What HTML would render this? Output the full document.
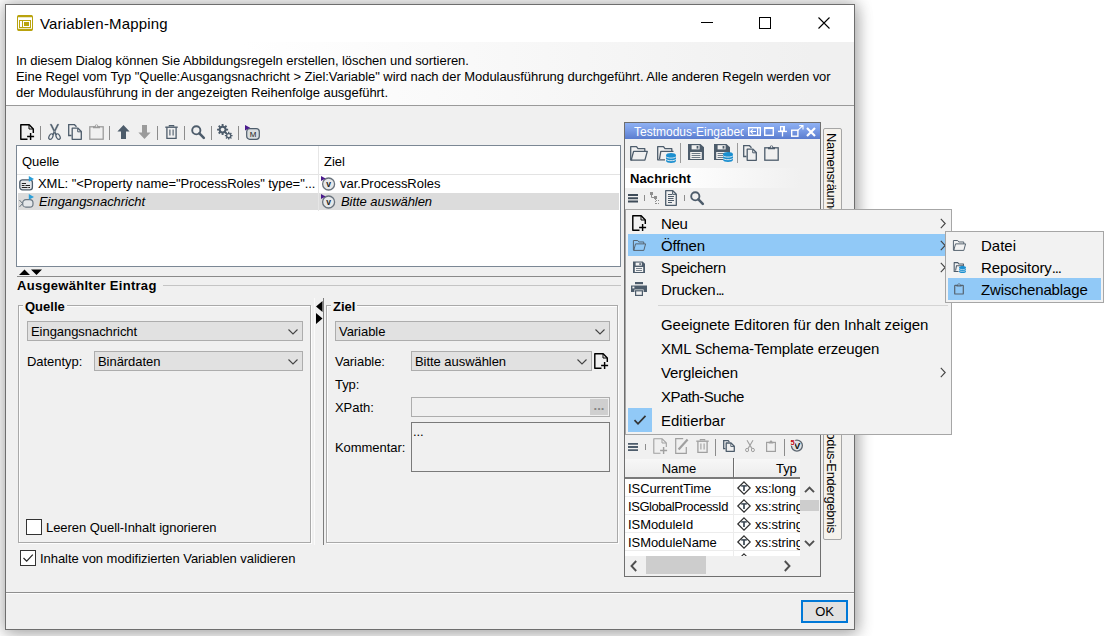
<!DOCTYPE html>
<html lang="de">
<head>
<meta charset="utf-8">
<title>Variablen-Mapping</title>
<style>
html,body{margin:0;padding:0;}
body{width:1112px;height:636px;overflow:hidden;background:#fff;position:relative;
 font-family:"Liberation Sans","DejaVu Sans",sans-serif;font-size:13px;color:#000;}
.abs{position:absolute;}
svg{display:block;overflow:visible;}
.t{position:absolute;white-space:nowrap;line-height:16px;height:16px;letter-spacing:-0.05px;}
.b{font-weight:bold;letter-spacing:0;}
.i{font-style:italic;}
#win{position:absolute;left:5px;top:4px;width:848px;height:624px;border:1px solid #6e6e6e;background:#f0f0f0;
 box-shadow:0 0 14px 2px rgba(0,0,0,.26), 3px 5px 16px rgba(0,0,0,.16);}
#titlebar{position:absolute;left:0;top:0;width:848px;height:37px;background:#fff;}
#title{position:absolute;left:34px;top:9px;font-size:15px;letter-spacing:0.18px;line-height:20px;color:#000;white-space:nowrap;}
#desc{position:absolute;left:6px;top:42px;width:848px;height:63px;background:linear-gradient(to right,#fff 0%,#fff 28%,#f0f0f0 95%);}
.hl{position:absolute;height:1px;background:#a0a0a0;}
.vl{position:absolute;width:1px;background:#a0a0a0;}
.combo{position:absolute;height:18px;border:1px solid #adadad;background:#e1e1e1;}
.combo .t{left:3px;top:2px;}
.combo svg{position:absolute;right:4px;top:7px;}
.grp{position:absolute;border:1px solid #a9a9a9;box-shadow:1px 1px 0 #fdfdfd, inset 1px 1px 0 #fdfdfd;}
.grp .t{background:#f0f0f0;}
.cb{position:absolute;width:14px;height:14px;border:1px solid #333;background:#fff;}
.menu{position:absolute;background:#f2f2f2;border:1px solid #a6a6a6;}
.vt{font-size:13px;line-height:16px;height:16px;letter-spacing:-0.3px;white-space:nowrap;transform-origin:0 0;transform:rotate(90deg);}
.mi{position:absolute;white-space:nowrap;line-height:22px;height:22px;font-size:15px;letter-spacing:-0.12px;}
.dots{letter-spacing:-1.2px;}
</style>
</head>
<body>
<div id="win">
 <div id="titlebar">
  <div id="title">Variablen-Mapping</div>
 </div>
</div>
<div id="desc"></div>

<svg class="abs" style="left:17px;top:15px" width="16" height="16" viewBox="0 0 16 16" ><rect x="0.5" y="0.5" width="15" height="15" rx="1.5" fill="#fff" stroke="#b9a30e" stroke-width="1"/><path d="M0.6 1.2H15.4M0.6 14.8H15.4" stroke="#b9a30e" stroke-width="2"/><rect x="2.5" y="5.5" width="11" height="7" fill="#fff" stroke="#b9a30e" stroke-width="1"/><path d="M5.5 5.5V12.5" stroke="#b9a30e" stroke-width="1"/><rect x="7" y="7" width="5" height="4" fill="#b9a30e"/></svg>
<svg class="abs" style="left:701px;top:17px" width="12" height="12" viewBox="0 0 12 12" ><path d="M0 5.5H12" stroke="#000" stroke-width="1"/></svg>
<svg class="abs" style="left:759px;top:17px" width="12" height="12" viewBox="0 0 12 12" ><rect x="0.5" y="0.5" width="11" height="11" fill="none" stroke="#000" stroke-width="1"/></svg>
<svg class="abs" style="left:818px;top:17px" width="12" height="12" viewBox="0 0 12 12" ><path d="M0.5 0.5L11.5 11.5M11.5 0.5L0.5 11.5" stroke="#000" stroke-width="1.1"/></svg>
<div class="t" style="left:16px;top:53px;">In diesem Dialog können Sie Abbildungsregeln erstellen, löschen und sortieren.</div>
<div class="t" style="left:16px;top:69px;">Eine Regel vom Typ "Quelle:Ausgangsnachricht &gt; Ziel:Variable" wird nach der Modulausführung durchgeführt. Alle anderen Regeln werden vor</div>
<div class="t" style="left:16px;top:85px;">der Modulausführung in der angezeigten Reihenfolge ausgeführt.</div>
<div class="hl" style="left:6px;top:105px;width:848px;background:#9a9a9a"></div>

<svg class="abs" style="left:20px;top:124px" width="15" height="17" viewBox="0 0 15 17" ><path d="M7.5 15.3H0.8V0.8H9.2L13.3 4.9V9" fill="none" stroke="#000" stroke-width="1.45" stroke-linejoin="round"/><path d="M9 1V5H13" fill="none" stroke="#000" stroke-width="1"/><path d="M10.6 9V16M7.1 12.5H14.1" stroke="#000" stroke-width="1.45" fill="none"/></svg>
<div class="abs" style="left:40px;top:126px;width:1px;height:14px;background:#8c8c8c"></div>
<svg class="abs" style="left:48px;top:124px" width="13" height="16" viewBox="0 0 13 16" ><path d="M2.2 0.3L3.6 0.3L8.6 10.6L7.6 11Z M10.8 0.3L9.4 0.3L4.4 10.6L5.4 11Z" fill="#4d5c6b" stroke="#4d5c6b" stroke-width="0.5"/><ellipse cx="2.9" cy="12.6" rx="1.8" ry="3" transform="rotate(28 2.9 12.6)" fill="none" stroke="#4d5c6b" stroke-width="1.2"/><ellipse cx="10.1" cy="12.6" rx="1.8" ry="3" transform="rotate(-28 10.1 12.6)" fill="none" stroke="#4d5c6b" stroke-width="1.2"/></svg>
<svg class="abs" style="left:68px;top:124px" width="15" height="16" viewBox="0 0 15 16" ><path d="M3.5 11.5H0.7V0.7H6.5L8.5 2.7" fill="none" stroke="#4d5c6b" stroke-width="1.3"/><path d="M4.2 4.2H10L13.3 7.5V15.3H4.2Z" fill="none" stroke="#4d5c6b" stroke-width="1.3" stroke-linejoin="round"/><path d="M9.7 4.5V7.8H13" fill="none" stroke="#4d5c6b" stroke-width="1"/></svg>
<svg class="abs" style="left:89px;top:124px" width="15" height="16" viewBox="0 0 15 16" ><rect x="0.8" y="2.8" width="13.4" height="12.4" fill="none" stroke="#9b9b9b" stroke-width="1.3"/><path d="M4 4.2V2.2H5.8C5.8 -0.2 9.2 -0.2 9.2 2.2H11V4.2Z" fill="#9b9b9b"/><circle cx="7.5" cy="1.9" r="0.8" fill="#f0f0f0"/></svg>
<div class="abs" style="left:109px;top:126px;width:1px;height:14px;background:#8c8c8c"></div>
<svg class="abs" style="left:117px;top:125px" width="13" height="14" viewBox="0 0 13 14" ><path d="M6.5 0L12.6 6.6H9V14H4V6.6H0.4Z" fill="#4d5c6b"/></svg>
<svg class="abs" style="left:138px;top:125px" width="13" height="14" viewBox="0 0 13 14" ><path d="M6.5 14L12.6 7.4H9V0H4V7.4H0.4Z" fill="#9b9b9b"/></svg>
<div class="abs" style="left:157px;top:126px;width:1px;height:14px;background:#8c8c8c"></div>
<svg class="abs" style="left:165px;top:125px" width="13" height="14" viewBox="0 0 13 14" ><path d="M0.3 2.2H12.7" stroke="#4d5c6b" stroke-width="1.4"/><path d="M4.3 1.6V0.6H8.7V1.6" stroke="#4d5c6b" stroke-width="1.1" fill="none"/><path d="M1.9 2.5V13.3H11.1V2.5" fill="none" stroke="#4d5c6b" stroke-width="1.3"/><path d="M4.9 4.6V10.4M8.1 4.6V10.4" stroke="#4d5c6b" stroke-width="1.1"/></svg>
<div class="abs" style="left:184px;top:126px;width:1px;height:14px;background:#8c8c8c"></div>
<svg class="abs" style="left:191px;top:125px" width="14" height="14" viewBox="0 0 14 14" ><circle cx="5.3" cy="5.3" r="4.1" fill="none" stroke="#4d5c6b" stroke-width="1.9"/><path d="M8.4 8.4L12.8 12.8" stroke="#4d5c6b" stroke-width="2.6" stroke-linecap="round"/></svg>
<div class="abs" style="left:211px;top:126px;width:1px;height:14px;background:#8c8c8c"></div>
<svg class="abs" style="left:217px;top:124px" width="16" height="16" viewBox="0 0 16 16" ><polygon points="11.12,4.64 11.12,6.56 9.52,6.54 9.04,7.71 10.18,8.82 8.82,10.18 7.71,9.04 6.54,9.52 6.56,11.12 4.64,11.12 4.66,9.52 3.49,9.04 2.38,10.18 1.02,8.82 2.16,7.71 1.68,6.54 0.08,6.56 0.08,4.64 1.68,4.66 2.16,3.49 1.02,2.38 2.38,1.02 3.49,2.16 4.66,1.68 4.64,0.08 6.56,0.08 6.54,1.68 7.71,2.16 8.82,1.02 10.18,2.38 9.04,3.49 9.52,4.66" fill="#4d5c6b"/><circle cx="5.6" cy="5.6" r="1.90" fill="#f0f0f0"/><polygon points="15.54,11.03 15.54,12.37 14.43,12.36 14.09,13.17 14.89,13.94 13.94,14.89 13.17,14.09 12.36,14.43 12.37,15.54 11.03,15.54 11.04,14.43 10.23,14.09 9.46,14.89 8.51,13.94 9.31,13.17 8.97,12.36 7.86,12.37 7.86,11.03 8.97,11.04 9.31,10.23 8.51,9.46 9.46,8.51 10.23,9.31 11.04,8.97 11.03,7.86 12.37,7.86 12.36,8.97 13.17,9.31 13.94,8.51 14.89,9.46 14.09,10.23 14.43,11.04" fill="#4d5c6b"/><circle cx="11.7" cy="11.7" r="1.40" fill="#f0f0f0"/></svg>
<div class="abs" style="left:238px;top:126px;width:1px;height:14px;background:#8c8c8c"></div>
<svg class="abs" style="left:245px;top:125px" width="15" height="15" viewBox="0 0 15 15" ><rect x="1.7" y="3.7" width="12.6" height="10.6" rx="3" fill="#d9dde0" stroke="#4d5c6b" stroke-width="1.2"/><path d="M0 0L5.2 2.8L0 5.6Z" fill="#4a1a8c"/><text x="8.1" y="12.2" font-family="Liberation Sans,sans-serif" font-size="8" text-anchor="middle" fill="#222">M</text></svg>
<div class="abs" style="left:16px;top:145px;width:603px;height:120px;border:1px solid #7b8794;background:#fff;">
 <div class="abs" style="left:0;top:28px;width:603px;height:1px;background:#e3e3e3"></div>
 <div class="abs" style="left:301px;top:0;width:1px;height:65px;background:#e6e6e6"></div>
 <div class="abs" style="left:1px;top:47px;width:300px;height:17px;background:#dcdcdc"></div>
 <div class="abs" style="left:302px;top:47px;width:300px;height:17px;background:#dcdcdc"></div>
</div>
<div class="t" style="left:22px;top:154px;">Quelle</div>
<div class="t" style="left:324px;top:154px;">Ziel</div>
<div class="t" style="left:38px;top:176px;">XML: "&lt;Property name="ProcessRoles" type="...</div>
<div class="t i" style="left:39px;top:194px;">Eingangsnachricht</div>
<div class="t" style="left:340px;top:176px;">var.ProcessRoles</div>
<div class="t i" style="left:341px;top:194px;">Bitte auswählen</div>

<svg class="abs" style="left:19px;top:176px" width="16" height="15" viewBox="0 0 16 15" ><rect x="0.8" y="3.8" width="12.6" height="10" rx="2.6" fill="#e4e7ea" stroke="#4d5c6b" stroke-width="1.3"/><path d="M2.8 7.5H7M2.8 9.5H5.5M6.5 9.5H11M2.8 11.5H8.5M9.3 11.5H11" stroke="#222" stroke-width="1"/><path d="M9.8 0L15 2.9L9.8 5.8Z" fill="#2b9fd9"/></svg>
<svg class="abs" style="left:19px;top:194px" width="16" height="14" viewBox="0 0 16 14" ><path d="M0.4 6L3.6 9.5L0.4 13" fill="none" stroke="#6b7782" stroke-width="1"/><rect x="3.7" y="5.7" width="10.3" height="7.4" rx="3.2" fill="#e4e7ea" stroke="#6b7782" stroke-width="1.2"/><path d="M9.8 0L15 2.9L9.8 5.8Z" fill="#2b9fd9"/></svg>
<svg class="abs" style="left:321px;top:176px" width="15" height="15" viewBox="0 0 15 15" ><circle cx="7.6" cy="8" r="6" fill="#e6e8ea" stroke="#69737d" stroke-width="1.3"/><path d="M0 0L4.6 2.4L0 5Z" fill="#4a1a8c"/><text x="7.6" y="11" font-family="Liberation Sans,sans-serif" font-size="8.5" font-weight="bold" text-anchor="middle" fill="#222">v</text></svg>
<svg class="abs" style="left:321px;top:194px" width="15" height="15" viewBox="0 0 15 15" ><circle cx="7.6" cy="8" r="6" fill="#e6e8ea" stroke="#69737d" stroke-width="1.3"/><path d="M0 0L4.6 2.4L0 5Z" fill="#4a1a8c"/><text x="7.6" y="11" font-family="Liberation Sans,sans-serif" font-size="8.5" font-weight="bold" text-anchor="middle" fill="#222">v</text></svg>
<svg class="abs" style="left:19px;top:269px" width="24" height="7" viewBox="0 0 24 7" ><path d="M0 6L5.5 0.5L11 6Z M12 0.5H23L17.5 6Z" fill="#000"/></svg>
<div class="hl" style="left:17px;top:276px;width:604px;background:#8a8a8a"></div>
<div class="t b" style="left:17px;top:278px;letter-spacing:0.3px;">Ausgewählter Eintrag</div>
<div class="hl" style="left:163px;top:285px;width:458px;background:#c4c4c4"></div>
<div class="grp" style="left:18px;top:305px;width:291px;height:236px;"></div>
<div class="t b" style="left:23px;top:299px;background:#f0f0f0;padding:0 2px;">Quelle</div>

<div class="combo" style="left:27px;top:321px;width:274px;"><div class="t">Eingangsnachricht</div><svg width="10" height="6" viewBox="0 0 10 6"><path d="M0.5 0.5L5 5L9.5 0.5" fill="none" stroke="#444" stroke-width="1.1"/></svg></div>
<div class="t" style="left:27px;top:354px;">Datentyp:</div>
<div class="combo" style="left:94px;top:351px;width:207px;"><div class="t">Binärdaten</div><svg width="10" height="6" viewBox="0 0 10 6"><path d="M0.5 0.5L5 5L9.5 0.5" fill="none" stroke="#444" stroke-width="1.1"/></svg></div>
<div class="cb" style="left:26px;top:519px;"></div><div class="t" style="left:46px;top:520px;">Leeren Quell-Inhalt ignorieren</div>
<svg class="abs" style="left:316px;top:301px" width="7" height="24" viewBox="0 0 7 24" ><path d="M6.5 0V11L0 5.5Z M0 12V23L6.5 17.5Z" fill="#000"/></svg>
<div class="vl" style="left:323px;top:298px;height:247px;background:#7d7d7d"></div><div class="vl" style="left:314px;top:298px;height:247px;background:#fafafa"></div>
<div class="grp" style="left:326px;top:305px;width:290px;height:236px;"></div>
<div class="t b" style="left:331px;top:299px;background:#f0f0f0;padding:0 2px;">Ziel</div>

<div class="combo" style="left:335px;top:321px;width:273px;"><div class="t">Variable</div><svg width="10" height="6" viewBox="0 0 10 6"><path d="M0.5 0.5L5 5L9.5 0.5" fill="none" stroke="#444" stroke-width="1.1"/></svg></div>
<div class="t" style="left:335px;top:354px;">Variable:</div>
<div class="combo" style="left:411px;top:351px;width:179px;"><div class="t">Bitte auswählen</div><svg width="10" height="6" viewBox="0 0 10 6"><path d="M0.5 0.5L5 5L9.5 0.5" fill="none" stroke="#444" stroke-width="1.1"/></svg></div>
<svg class="abs" style="left:594px;top:353px" width="15" height="17" viewBox="0 0 15 17" ><path d="M7.5 15.3H0.8V0.8H9.2L13.3 4.9V9" fill="none" stroke="#000" stroke-width="1.45" stroke-linejoin="round"/><path d="M9 1V5H13" fill="none" stroke="#000" stroke-width="1"/><path d="M10.6 9V16M7.1 12.5H14.1" stroke="#000" stroke-width="1.45" fill="none"/></svg>
<div class="t" style="left:335px;top:377px;">Typ:</div>
<div class="t" style="left:335px;top:400px;">XPath:</div>
<div class="abs" style="left:411px;top:397px;width:197px;height:18px;border:1px solid #adadad;background:#f0f0f0"></div>
<div class="abs" style="left:590px;top:399px;width:18px;height:16px;background:#cfcfcf;color:#858585;font-size:13px;font-weight:bold;line-height:14px;text-align:center;">...</div>
<div class="t" style="left:335px;top:440px;">Kommentar:</div>
<div class="abs" style="left:411px;top:422px;width:197px;height:48px;border:1px solid #7a7a7a;background:#f0f0f0"></div>
<div class="t" style="left:413px;top:424px;">...</div>
<div class="cb" style="left:20px;top:550px;"></div>
<svg class="abs" style="left:21px;top:551px" width="14" height="14" viewBox="0 0 14 14" ><path d="M2.5 7L5.7 10.2L11.8 3.6" fill="none" stroke="#222" stroke-width="1.2"/></svg>
<div class="t" style="left:40px;top:551px;">Inhalte von modifizierten Variablen validieren</div>
<div class="hl" style="left:6px;top:592px;width:848px;background:#8f8f8f"></div><div class="hl" style="left:6px;top:593px;width:848px;background:#fcfcfc"></div>
<div class="abs" style="left:801px;top:600px;width:43px;height:19px;border:2px solid #0078d7;background:#e1e1e1;"><div class="t" style="left:0;width:43px;text-align:center;top:2px;">OK</div></div><div class="abs" style="left:624px;top:122px;width:195px;height:453px;border:1px solid #6f6f6f;background:#f0f0f0;"></div>
<div class="abs" style="left:625px;top:123px;width:195px;height:16px;background:linear-gradient(#8fb1f3,#7a9ce6 45%,#5a7cce);overflow:hidden;"><div class="t" style="left:9px;top:1px;color:#fff;width:110px;overflow:hidden;letter-spacing:0;font-size:12px;">Testmodus-Eingabedaten</div></div>
<svg class="abs" style="left:748px;top:127px" width="13" height="9" viewBox="0 0 13 9" ><rect x="0.7" y="0.7" width="11.6" height="7.6" fill="none" stroke="#fff" stroke-width="1.4"/><path d="M9.6 1V8" stroke="#fff" stroke-width="1.2"/><path d="M2.6 4.5H8M4.8 2.4L2.6 4.5L4.8 6.6" stroke="#fff" stroke-width="1.1" fill="none"/></svg>
<svg class="abs" style="left:764px;top:127px" width="10" height="9" viewBox="0 0 10 9" ><rect x="0.7" y="1.2" width="8.6" height="7.1" fill="none" stroke="#fff" stroke-width="1.4"/><path d="M0 1H10" stroke="#fff" stroke-width="2"/></svg>
<svg class="abs" style="left:778px;top:126px" width="9" height="11" viewBox="0 0 9 11" ><path d="M2.6 0.6H6.4V5H2.6Z" fill="none" stroke="#fff" stroke-width="1.2"/><path d="M5.6 0.6V5" stroke="#fff" stroke-width="1.4"/><path d="M0 5.4H9" stroke="#fff" stroke-width="1.4"/><path d="M4.5 5.4V10.5" stroke="#fff" stroke-width="1.3"/></svg>
<svg class="abs" style="left:791px;top:125px" width="13" height="12" viewBox="0 0 13 12" ><rect x="0.7" y="5.2" width="6.2" height="6" fill="none" stroke="#fff" stroke-width="1.4"/><path d="M6.2 5.8L11.6 0.8M8.2 0.6H12V4.4" stroke="#fff" stroke-width="1.1" fill="none"/></svg>
<svg class="abs" style="left:806px;top:127px" width="10" height="10" viewBox="0 0 10 10" ><path d="M1 1L9 9M9 1L1 9" stroke="#fff" stroke-width="2.2"/></svg>
<svg class="abs" style="left:630px;top:146px" width="18" height="15" viewBox="0 0 18 15" ><path d="M2.2 13.8H0.7V0.7H6.5L8 2.7H14.8V5.2" fill="none" stroke="#4d5c6b" stroke-width="1.3" stroke-linejoin="round"/><path d="M3.6 5.3H17.3L14.9 14.2H1.2Z" fill="none" stroke="#4d5c6b" stroke-width="1.3" stroke-linejoin="round"/></svg>
<svg class="abs" style="left:657px;top:146px" width="18" height="15" viewBox="0 0 18 15" ><path d="M8 13.8H0.7V0.7H6.5L8 2.7H14.8V5.2" fill="none" stroke="#4d5c6b" stroke-width="1.3" stroke-linejoin="round"/><path d="M2.5 13L3.8 5.3H16.5" fill="none" stroke="#4d5c6b" stroke-width="1.3" stroke-linejoin="round"/></svg><svg class="abs" style="left:666px;top:153px" width="10" height="10" viewBox="0 0 10 10" ><path d="M0 2.2V7.8C0 10.7 10 10.7 10 7.8V2.2C10 -0.7 0 -0.7 0 2.2Z" fill="#1b8fd0"/><path d="M0 3.6C1 5.6 9 5.6 10 3.6M0 6.2C1 8.2 9 8.2 10 6.2" fill="none" stroke="#f0f0f0" stroke-width="0.9"/></svg>
<div class="abs" style="left:680px;top:143px;width:1px;height:20px;background:#9a9a9a"></div>
<svg class="abs" style="left:688px;top:144px" width="16" height="16" viewBox="0 0 16 16" ><path d="M0 0H12.5L16 3.2V16H0Z" fill="#4d5c6b"/><rect x="3.6" y="1.2" width="8" height="4.2" fill="#f0f0f0"/><rect x="8.6" y="2" width="1.8" height="2.6" fill="#4d5c6b"/><rect x="2.2" y="8" width="11.6" height="7" fill="#f0f0f0"/><path d="M3.6 9.5H12.4M3.6 11.5H12.4M3.6 13.5H12.4" stroke="#4d5c6b" stroke-width="1" opacity="0.8"/></svg>
<svg class="abs" style="left:714px;top:144px" width="16" height="16" viewBox="0 0 16 16" ><path d="M0 0H12.5L16 3.2V16H0Z" fill="#4d5c6b"/><rect x="3.6" y="1.2" width="8" height="4.2" fill="#f0f0f0"/><rect x="8.6" y="2" width="1.8" height="2.6" fill="#4d5c6b"/><rect x="2.2" y="8" width="11.6" height="7" fill="#f0f0f0"/><path d="M3.6 9.5H12.4M3.6 11.5H12.4M3.6 13.5H12.4" stroke="#4d5c6b" stroke-width="1" opacity="0.8"/></svg><svg class="abs" style="left:723px;top:152px" width="10" height="10" viewBox="0 0 10 10" ><path d="M0 2.2V7.8C0 10.7 10 10.7 10 7.8V2.2C10 -0.7 0 -0.7 0 2.2Z" fill="#1b8fd0"/><path d="M0 3.6C1 5.6 9 5.6 10 3.6M0 6.2C1 8.2 9 8.2 10 6.2" fill="none" stroke="#f0f0f0" stroke-width="0.9"/></svg>
<div class="abs" style="left:737px;top:143px;width:1px;height:20px;background:#9a9a9a"></div>
<svg class="abs" style="left:743px;top:145px" width="15" height="16" viewBox="0 0 15 16" ><path d="M3.5 11.5H0.7V0.7H6.5L8.5 2.7" fill="none" stroke="#4d5c6b" stroke-width="1.3"/><path d="M4.2 4.2H10L13.3 7.5V15.3H4.2Z" fill="none" stroke="#4d5c6b" stroke-width="1.3" stroke-linejoin="round"/><path d="M9.7 4.5V7.8H13" fill="none" stroke="#4d5c6b" stroke-width="1"/></svg>
<svg class="abs" style="left:764px;top:145px" width="15" height="16" viewBox="0 0 15 16" ><rect x="0.8" y="2.8" width="13.4" height="12.4" fill="none" stroke="#4d5c6b" stroke-width="1.3"/><path d="M4 4.2V2.2H5.8C5.8 -0.2 9.2 -0.2 9.2 2.2H11V4.2Z" fill="#4d5c6b"/><circle cx="7.5" cy="1.9" r="0.8" fill="#f0f0f0"/></svg>
<div class="abs" style="left:625px;top:168px;width:195px;height:20px;background:linear-gradient(to right,#fff 0%,#fff 25%,#f0f0f0 90%);"></div>
<div class="t b" style="left:630px;top:171px;letter-spacing:0.12px;">Nachricht</div>
<svg class="abs" style="left:628px;top:194px" width="10" height="9" viewBox="0 0 10 9" ><path d="M0 1H10M0 4.25H10M0 7.5H10" stroke="#3f4c59" stroke-width="1.9"/></svg>
<div class="abs" style="left:644px;top:195px;width:1px;height:6px;background:#8c8c8c"></div>
<svg class="abs" style="left:650px;top:192px" width="11" height="13" viewBox="0 0 11 13" ><rect x="0" y="0" width="3" height="3" fill="#8e8e8e"/><path d="M1.5 3V5.5H4.5" stroke="#8e8e8e" stroke-width="1" fill="none"/><rect x="4" y="4" width="3" height="3" fill="#8e8e8e"/><path d="M5.5 7V12M6 8.5H10M6 11.5H10" stroke="#8e8e8e" stroke-width="1" stroke-dasharray="1 1" fill="none"/></svg>
<svg class="abs" style="left:665px;top:190px" width="12" height="16" viewBox="0 0 12 16" ><path d="M0.7 0.7H7.8L11.3 4.2V15.3H0.7Z" fill="none" stroke="#4d5c6b" stroke-width="1.3" stroke-linejoin="round"/><path d="M7.6 1V4.4H11" fill="none" stroke="#4d5c6b" stroke-width="1"/><path d="M3 4.5H7M3 6.5H9M3 8.5H8.5M3 10.5H9M3 12.5H7" stroke="#4d5c6b" stroke-width="1"/></svg>
<div class="abs" style="left:684px;top:195px;width:1px;height:6px;background:#8c8c8c"></div>
<svg class="abs" style="left:690px;top:191px" width="14" height="14" viewBox="0 0 14 14" ><circle cx="5.3" cy="5.3" r="4.1" fill="none" stroke="#4d5c6b" stroke-width="1.9"/><path d="M8.4 8.4L12.8 12.8" stroke="#4d5c6b" stroke-width="2.6" stroke-linecap="round"/></svg>
<svg class="abs" style="left:628px;top:443px" width="10" height="8" viewBox="0 0 10 8" ><path d="M0 0.9H10M0 4H10M0 7.1H10" stroke="#4d5c6b" stroke-width="1.8"/></svg>
<div class="abs" style="left:645px;top:444px;width:1px;height:6px;background:#8c8c8c"></div>
<svg class="abs" style="left:653px;top:438px" width="15" height="17" viewBox="0 0 15 17" ><path d="M7.5 15.3H0.8V0.8H9.2L13.3 4.9V9" fill="none" stroke="#a0a0a0" stroke-width="1.1" stroke-linejoin="round"/><path d="M9 1V5H13" fill="none" stroke="#a0a0a0" stroke-width="1"/><path d="M10.6 9V16M7.1 12.5H14.1" stroke="#a0a0a0" stroke-width="1.45" fill="none"/></svg>
<svg class="abs" style="left:675px;top:438px" width="14" height="16" viewBox="0 0 14 16" ><path d="M8.2 0.7H0.7V15.3H11.3V9" fill="none" stroke="#a0a0a0" stroke-width="1.2"/><path d="M3.6 11.6L12.6 1.6" stroke="#a0a0a0" stroke-width="2.2"/></svg>
<svg class="abs" style="left:696px;top:439px" width="13" height="14" viewBox="0 0 13 14" ><path d="M0.3 2.2H12.7" stroke="#a0a0a0" stroke-width="1.4"/><path d="M4.3 1.6V0.6H8.7V1.6" stroke="#a0a0a0" stroke-width="1.1" fill="none"/><path d="M1.9 2.5V13.3H11.1V2.5" fill="none" stroke="#a0a0a0" stroke-width="1.3"/><path d="M4.9 4.6V10.4M8.1 4.6V10.4" stroke="#a0a0a0" stroke-width="1.1"/></svg>
<div class="abs" style="left:715px;top:439px;width:1px;height:17px;background:#8c8c8c"></div>
<svg class="abs" style="left:723px;top:440px" width="12" height="12" viewBox="0 0 12 12" ><path d="M2.4 8.6H0.7V0.7H5.2L6.4 1.9" fill="none" stroke="#4d5c6b" stroke-width="1.3"/><path d="M3.2 3H8L11.3 6.3V11.3H3.2Z" fill="none" stroke="#4d5c6b" stroke-width="1.3" stroke-linejoin="round"/><path d="M7.8 3.2V6.5H11" fill="none" stroke="#4d5c6b" stroke-width="0.9"/></svg>
<svg class="abs" style="left:745px;top:440px" width="10" height="12" viewBox="0 0 10 12" ><path d="M2 0.3L7 8.6M8 0.3L3 8.6" stroke="#a0a0a0" stroke-width="1.1" fill="none"/><ellipse cx="2.1" cy="10" rx="1.5" ry="1.7" fill="none" stroke="#a0a0a0" stroke-width="1"/><ellipse cx="7.9" cy="10" rx="1.5" ry="1.7" fill="none" stroke="#a0a0a0" stroke-width="1"/></svg>
<svg class="abs" style="left:766px;top:440px" width="10" height="12" viewBox="0 0 10 12" ><rect x="0.6" y="2.4" width="8.8" height="9" fill="none" stroke="#a0a0a0" stroke-width="1.2"/><path d="M2.6 3.6V1.8H3.8C3.8 0 6.2 0 6.2 1.8H7.4V3.6Z" fill="#a0a0a0"/></svg>
<div class="abs" style="left:784px;top:439px;width:1px;height:17px;background:#8c8c8c"></div>
<svg class="abs" style="left:790px;top:439px" width="14" height="14" viewBox="0 0 14 14" ><circle cx="6.9" cy="6.6" r="5.5" fill="#dfe2e5" stroke="#5c6670" stroke-width="1.3"/><text x="7.2" y="10.3" font-family="Liberation Sans,sans-serif" font-size="9.5" font-weight="bold" text-anchor="middle" fill="#111">V</text><text x="0.6" y="6" font-family="Liberation Sans,sans-serif" font-size="7.5" font-weight="bold" fill="#c00010" stroke="#f0f0f0" stroke-width="1.6" paint-order="stroke">5</text></svg>
<div class="abs" style="left:625px;top:459px;width:175px;height:18px;background:linear-gradient(#f7f7f7,#ececec);border-bottom:2px solid #7a7a7a;"></div>
<div class="abs" style="left:733px;top:458px;width:1px;height:20px;background:#6e6e6e;"></div><div class="abs" style="left:734px;top:459px;width:1px;height:18px;background:#fafafa;"></div>
<div class="t" style="left:625px;top:461px;width:108px;text-align:center;">Name</div>
<div class="abs" style="left:734px;top:459px;width:66px;height:18px;overflow:hidden"><div class="t" style="left:42px;top:2px;">Typ</div></div>
<div class="abs" style="left:625px;top:479px;width:175px;height:77px;background:#fff;overflow:hidden;">
<div class="abs" style="left:0;top:17px;width:175px;height:1px;background:#ececec"></div>
<div class="t" style="left:3px;top:2px;width:105px;overflow:hidden;letter-spacing:-0.07px">ISCurrentTime</div>
<svg class="abs" style="left:112px;top:2px" width="14" height="14" viewBox="0 0 14 14" ><path d="M7 0.8L13.2 7L7 13.2L0.8 7Z" fill="#fff" stroke="#2e2e2e" stroke-width="1.2"/><path d="M4.2 4.9H9.8" stroke="#3a4652" stroke-width="1.5"/><path d="M7 4.9V10" stroke="#3a4652" stroke-width="1.7"/></svg>
<div class="t" style="left:130px;top:2px;">xs:long</div>
<div class="abs" style="left:0;top:35px;width:175px;height:1px;background:#ececec"></div>
<div class="t" style="left:3px;top:20px;width:105px;overflow:hidden;letter-spacing:-0.45px">ISGlobalProcessId</div>
<svg class="abs" style="left:112px;top:20px" width="14" height="14" viewBox="0 0 14 14" ><path d="M7 0.8L13.2 7L7 13.2L0.8 7Z" fill="#fff" stroke="#2e2e2e" stroke-width="1.2"/><path d="M4.2 4.9H9.8" stroke="#3a4652" stroke-width="1.5"/><path d="M7 4.9V10" stroke="#3a4652" stroke-width="1.7"/></svg>
<div class="t" style="left:130px;top:20px;">xs:string</div>
<div class="abs" style="left:0;top:53px;width:175px;height:1px;background:#ececec"></div>
<div class="t" style="left:3px;top:38px;width:105px;overflow:hidden;letter-spacing:-0.07px">ISModuleId</div>
<svg class="abs" style="left:112px;top:38px" width="14" height="14" viewBox="0 0 14 14" ><path d="M7 0.8L13.2 7L7 13.2L0.8 7Z" fill="#fff" stroke="#2e2e2e" stroke-width="1.2"/><path d="M4.2 4.9H9.8" stroke="#3a4652" stroke-width="1.5"/><path d="M7 4.9V10" stroke="#3a4652" stroke-width="1.7"/></svg>
<div class="t" style="left:130px;top:38px;">xs:string</div>
<div class="abs" style="left:0;top:71px;width:175px;height:1px;background:#ececec"></div>
<div class="t" style="left:3px;top:56px;width:105px;overflow:hidden;letter-spacing:-0.07px">ISModuleName</div>
<svg class="abs" style="left:112px;top:56px" width="14" height="14" viewBox="0 0 14 14" ><path d="M7 0.8L13.2 7L7 13.2L0.8 7Z" fill="#fff" stroke="#2e2e2e" stroke-width="1.2"/><path d="M4.2 4.9H9.8" stroke="#3a4652" stroke-width="1.5"/><path d="M7 4.9V10" stroke="#3a4652" stroke-width="1.7"/></svg>
<div class="t" style="left:130px;top:56px;">xs:string</div>
<div class="abs" style="left:108px;top:0;width:1px;height:77px;background:#ececec"></div>
<svg class="abs" style="left:112px;top:74px" width="14" height="14" viewBox="0 0 14 14" ><path d="M7 0.8L13.2 7L7 13.2L0.8 7Z" fill="#fff" stroke="#333" stroke-width="1.1"/></svg>
</div>
<div class="abs" style="left:800px;top:479px;width:19px;height:77px;background:#f0f0f0"></div>
<svg class="abs" style="left:804px;top:486px" width="11" height="7" viewBox="0 0 11 7" ><path d="M1 6.2L5.5 1.5L10 6.2" fill="none" stroke="#505050" stroke-width="1.9"/></svg>
<div class="abs" style="left:800px;top:500px;width:19px;height:11px;background:#cdcdcd"></div>
<svg class="abs" style="left:804px;top:540px" width="11" height="7" viewBox="0 0 11 7" ><path d="M1 0.8L5.5 5.5L10 0.8" fill="none" stroke="#505050" stroke-width="1.9"/></svg>
<div class="abs" style="left:625px;top:556px;width:195px;height:19px;background:#f0f0f0"></div>
<svg class="abs" style="left:630px;top:560px" width="8" height="12" viewBox="0 0 8 12" ><path d="M6.2 1L1.5 6L6.2 11" fill="none" stroke="#505050" stroke-width="1.9"/></svg>
<div class="abs" style="left:646px;top:556px;width:60px;height:18px;background:#cdcdcd"></div>
<svg class="abs" style="left:783px;top:560px" width="8" height="12" viewBox="0 0 8 12" ><path d="M1.8 1L6.5 6L1.8 11" fill="none" stroke="#505050" stroke-width="1.9"/></svg>
<div class="abs" style="left:823px;top:128px;width:17px;height:150px;border:1px solid #a6a6a6;border-radius:2px 2px 0 0;background:#f5f2ec;"></div>
<div class="abs vt" style="left:839px;top:133px;">Namensräume</div>
<div class="abs" style="left:823px;top:400px;width:17px;height:138px;border:1px solid #a6a6a6;border-radius:0 0 2px 2px;background:#f5f2ec;"></div>
<div class="abs vt" style="left:839px;top:333px;width:200px;text-align:right;">Testmodus-Endergebnis</div><div class="menu" style="left:625px;top:209px;width:325px;height:224px;"></div>
<div class="abs" style="left:628px;top:234px;width:320px;height:22px;background:#91c9f7"></div>
<div class="abs" style="left:628px;top:408px;width:24px;height:24px;background:#91c9f7"></div>
<div class="abs" style="left:658px;top:305px;width:290px;height:1px;background:#d4d4d4"></div>
<div class="mi" style="left:661px;top:213px;height:22px;line-height:22px;letter-spacing:-0.3px">Neu</div>
<div class="mi" style="left:661px;top:235px;height:22px;line-height:22px;letter-spacing:-0.15px">Öffnen</div>
<div class="mi" style="left:661px;top:257px;height:22px;line-height:22px;letter-spacing:-0.3px">Speichern</div>
<div class="mi" style="left:661px;top:279px;height:22px;line-height:22px;letter-spacing:-0.2px">Drucken<span class="dots" style="letter-spacing:-1.6px">...</span></div>
<div class="mi" style="left:661px;top:313px;height:24px;line-height:24px;letter-spacing:-0.05px">Geeignete Editoren für den Inhalt zeigen</div>
<div class="mi" style="left:661px;top:337px;height:24px;line-height:24px;letter-spacing:-0.14px">XML Schema-Template erzeugen</div>
<div class="mi" style="left:661px;top:361px;height:24px;line-height:24px;letter-spacing:-0.13px">Vergleichen</div>
<div class="mi" style="left:661px;top:385px;height:24px;line-height:24px;letter-spacing:-0.5px">XPath-Suche</div>
<div class="mi" style="left:661px;top:409px;height:24px;line-height:24px;letter-spacing:0px">Editierbar</div>
<svg class="abs" style="left:940px;top:218px" width="6" height="11" viewBox="0 0 6 11" ><path d="M0.8 0.8L5.2 5.5L0.8 10.2" fill="none" stroke="#444" stroke-width="1.1"/></svg>
<svg class="abs" style="left:940px;top:240px" width="6" height="11" viewBox="0 0 6 11" ><path d="M0.8 0.8L5.2 5.5L0.8 10.2" fill="none" stroke="#444" stroke-width="1.1"/></svg>
<svg class="abs" style="left:940px;top:262px" width="6" height="11" viewBox="0 0 6 11" ><path d="M0.8 0.8L5.2 5.5L0.8 10.2" fill="none" stroke="#444" stroke-width="1.1"/></svg>
<svg class="abs" style="left:940px;top:367px" width="6" height="11" viewBox="0 0 6 11" ><path d="M0.8 0.8L5.2 5.5L0.8 10.2" fill="none" stroke="#444" stroke-width="1.1"/></svg>
<svg class="abs" style="left:632px;top:215px" width="15" height="17" viewBox="0 0 15 17" ><path d="M7.5 15.3H0.8V0.8H9.2L13.3 4.9V9" fill="none" stroke="#000" stroke-width="1.45" stroke-linejoin="round"/><path d="M9 1V5H13" fill="none" stroke="#000" stroke-width="1"/><path d="M10.6 9V16M7.1 12.5H14.1" stroke="#000" stroke-width="1.45" fill="none"/></svg>
<svg class="abs" style="left:632px;top:240px" width="15" height="11" viewBox="0 0 18 15" ><path d="M2.2 13.8H0.7V0.7H6.5L8 2.7H14.8V5.2" fill="none" stroke="#56636f" stroke-width="1.35" stroke-linejoin="round"/><path d="M3.6 5.3H17.3L14.9 14.2H1.2Z" fill="none" stroke="#56636f" stroke-width="1.35" stroke-linejoin="round"/></svg>
<svg class="abs" style="left:633px;top:261px" width="12" height="12" viewBox="0 0 12 12" ><path d="M0 0.5H9.6L12 2.8V12H0Z" fill="#4d5c6b"/><rect x="2.6" y="1.6" width="6.2" height="3" fill="#f2f2f2"/><rect x="6.4" y="2.1" width="1.4" height="2" fill="#4d5c6b"/><rect x="1.8" y="6" width="8.4" height="5" fill="#f2f2f2"/><path d="M3 7.5H9M3 9.5H9" stroke="#4d5c6b" stroke-width="1" opacity="0.75"/></svg>
<svg class="abs" style="left:631px;top:282px" width="16" height="14" viewBox="0 0 16 14" ><rect x="4" y="0" width="8" height="2.2" fill="#4d5c6b"/><path d="M0 3.4H16V10H12.6V7.6H3.4V10H0Z" fill="#4d5c6b"/><rect x="1.4" y="4.6" width="2" height="1.8" fill="#f2f2f2"/><rect x="4.6" y="8.8" width="6.8" height="4.6" fill="none" stroke="#4d5c6b" stroke-width="1.2"/></svg>
<svg class="abs" style="left:633px;top:414px" width="14" height="12" viewBox="0 0 14 12" ><path d="M1.5 6.2L5 9.8L12.5 1.8" fill="none" stroke="#333" stroke-width="1.7"/></svg>
<div class="menu" style="left:945px;top:231px;width:157px;height:70px;"></div>
<div class="abs" style="left:948px;top:278px;width:153px;height:22px;background:#91c9f7"></div>
<div class="mi" style="left:981px;top:235px;letter-spacing:0px">Datei</div>
<div class="mi" style="left:981px;top:257px;letter-spacing:-0.1px">Repository<span class="dots">...</span></div>
<div class="mi" style="left:981px;top:279px;letter-spacing:-0.12px">Zwischenablage</div>
<svg class="abs" style="left:952px;top:240px" width="15" height="11" viewBox="0 0 18 15" ><path d="M2.2 13.8H0.7V0.7H6.5L8 2.7H14.8V5.2" fill="none" stroke="#56636f" stroke-width="1.35" stroke-linejoin="round"/><path d="M3.6 5.3H17.3L14.9 14.2H1.2Z" fill="none" stroke="#56636f" stroke-width="1.35" stroke-linejoin="round"/></svg>
<svg class="abs" style="left:953px;top:262px" width="13" height="11" viewBox="0 0 13 12" ><path d="M5.5 10.3H0.7V0.7H4.6L5.8 2.2H10.8V4" fill="none" stroke="#4d5c6b" stroke-width="1.2" stroke-linejoin="round"/><path d="M2.2 9.5L3.2 4.2H11.5" fill="none" stroke="#4d5c6b" stroke-width="1.1"/></svg><svg class="abs" style="left:959px;top:266px" width="7" height="7" viewBox="0 0 10 10" ><path d="M0 2.2V7.8C0 10.7 10 10.7 10 7.8V2.2C10 -0.7 0 -0.7 0 2.2Z" fill="#1b8fd0"/><path d="M0 3.6C1 5.6 9 5.6 10 3.6M0 6.2C1 8.2 9 8.2 10 6.2" fill="none" stroke="#f2f2f2" stroke-width="0.9"/></svg>
<svg class="abs" style="left:954px;top:283px" width="10" height="12" viewBox="0 0 10 12" ><rect x="0.7" y="2.4" width="8.6" height="8.6" rx="0.6" fill="none" stroke="#56636f" stroke-width="1.2"/><path d="M2.4 3.4V2.2H3.4C3.4 -0.2 6.6 -0.2 6.6 2.2H7.6V3.4Z" fill="#56636f"/><circle cx="5" cy="1.8" r="0.8" fill="#91c9f7"/></svg></body></html>
